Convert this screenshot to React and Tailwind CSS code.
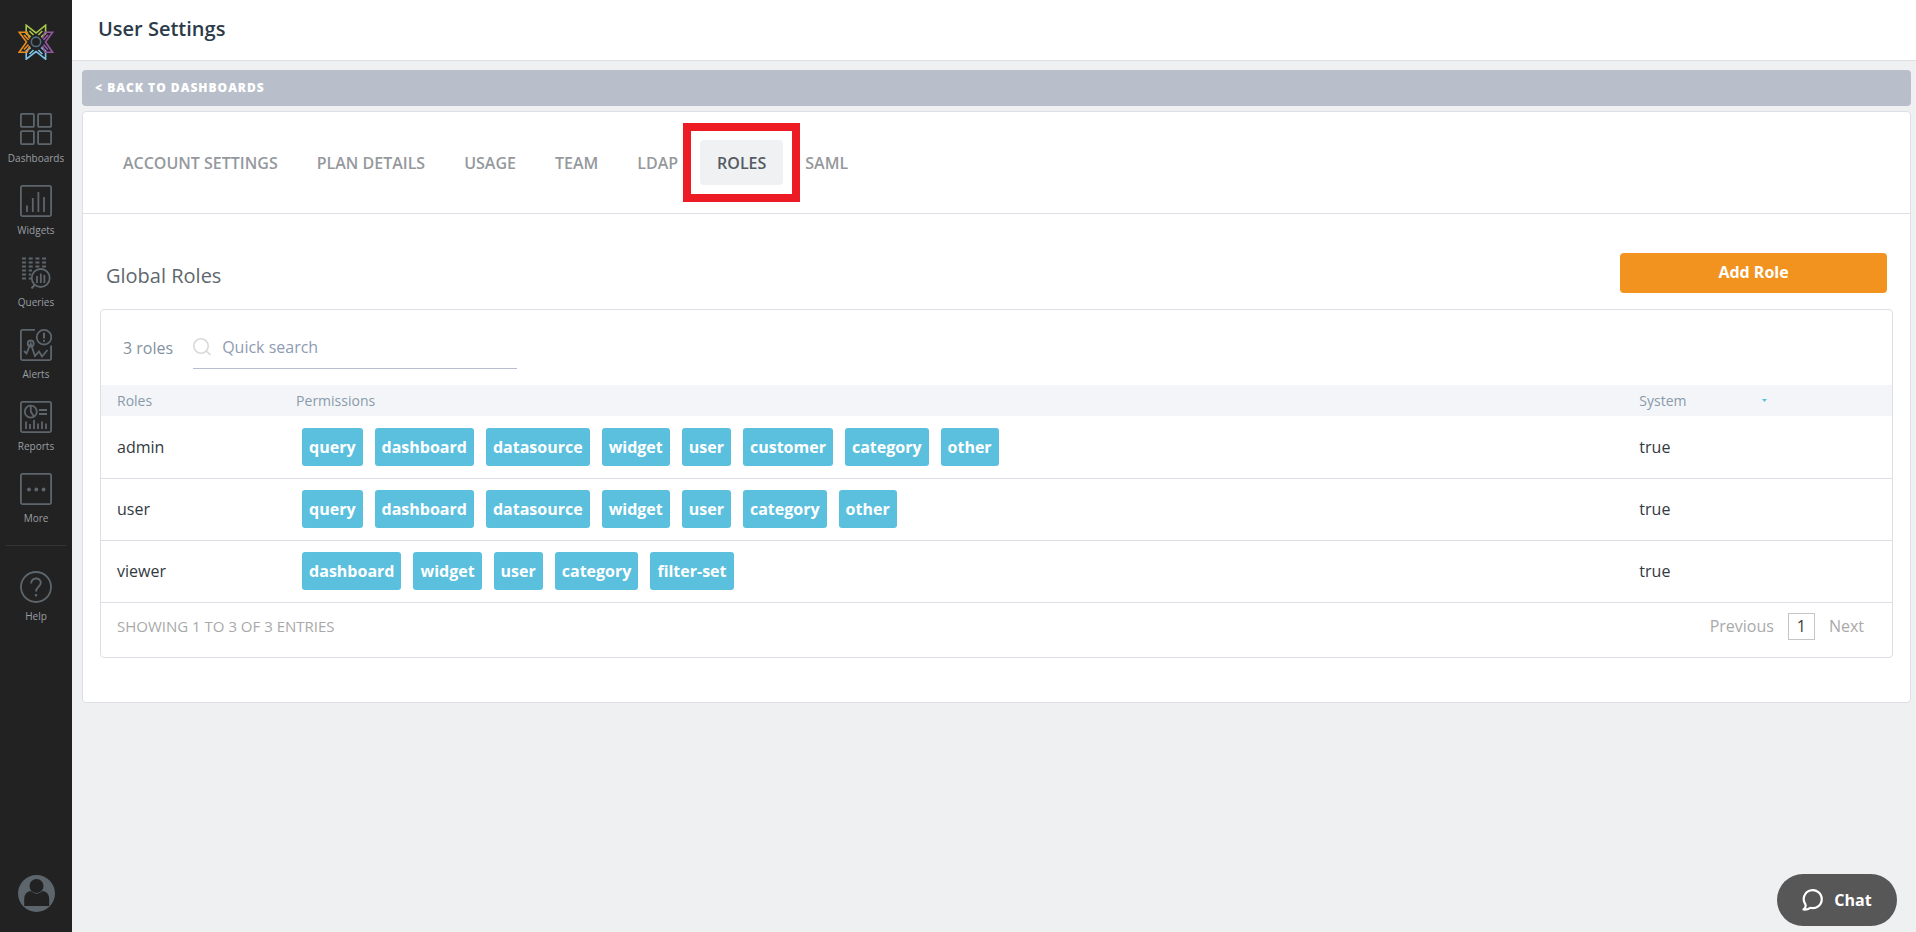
const NAV = [
  { label: 'Dashboards', Icon: DashboardsIcon },
  { label: 'Widgets', Icon: WidgetsIcon },
  { label: 'Queries', Icon: QueriesIcon },
  { label: 'Alerts', Icon: AlertsIcon },
  { label: 'Reports', Icon: ReportsIcon },
  { label: 'More', Icon: MoreIcon },
];

const TABS = ['Account Settings', 'Plan Details', 'Usage', 'Team', 'LDAP', 'Roles', 'SAML'];

const ROLES = [
  {
    name: 'admin',
    permissions: ['query', 'dashboard', 'datasource', 'widget', 'user', 'customer', 'category', 'other'],
    system: 'true',
  },
  {
    name: 'user',
    permissions: ['query', 'dashboard', 'datasource', 'widget', 'user', 'category', 'other'],
    system: 'true',
  },
  {
    name: 'viewer',
    permissions: ['dashboard', 'widget', 'user', 'category', 'filter-set'],
    system: 'true',
  },
];

function IconFrame({ children }) {
  return (
    <svg className="size-8" viewBox="0 0 32 32" fill="none" stroke="currentColor" strokeWidth="1.8" aria-hidden="true">
      {children}
    </svg>
  );
}

function DashboardsIcon() {
  return (
    <IconFrame>
      <rect x="0.9" y="0.9" width="13" height="13" rx="1" />
      <rect x="18.1" y="0.9" width="13" height="13" rx="1" />
      <rect x="0.9" y="18.1" width="13" height="13" rx="1" />
      <rect x="18.1" y="18.1" width="13" height="13" rx="1" />
    </IconFrame>
  );
}

function WidgetsIcon() {
  return (
    <IconFrame>
      <rect x="0.9" y="0.9" width="30.2" height="30.2" rx="1.5" />
      <path d="M7 20.5V27M12.8 13V27M18.4 7V27M24 12V27" />
    </IconFrame>
  );
}

function QueriesIcon() {
  return (
    <IconFrame>
      <path d="M2 1.5H26" strokeDasharray="4 2.7" />
      <path d="M2 5.5H26" strokeDasharray="4 2.7" />
      <path d="M2 9.5H26" strokeDasharray="4 2.7" />
      <path d="M2 13.5H12" strokeDasharray="4 2.7" />
      <path d="M2 17.5H11" strokeDasharray="4 2.7" />
      <path d="M2 21.5H11" strokeDasharray="4 2.7" />
      <circle cx="20.7" cy="21" r="9" />
      <path d="M17 19V26M20.8 16.5V26M24.4 18V26" />
      <path d="M14.5 28L11.5 31.5" strokeWidth="2" />
    </IconFrame>
  );
}

function AlertsIcon() {
  return (
    <IconFrame>
      <path d="M15 0.9H2.4Q0.9 0.9 0.9 2.4V29.6Q0.9 31.1 2.4 31.1H29.6Q31.1 31.1 31.1 29.6V16.5" />
      <circle cx="24" cy="8.2" r="7.3" />
      <path d="M24 3.8V9.4M24 11V12.8" strokeWidth="2" />
      <circle cx="10.7" cy="14.5" r="3" />
      <path d="M4 22L6.5 24.5L10.7 14.5L15 27L19 22.5L22 27.5L27.5 21" />
    </IconFrame>
  );
}

function ReportsIcon() {
  return (
    <IconFrame>
      <rect x="0.9" y="0.9" width="30.2" height="30.2" rx="1.5" />
      <circle cx="10.8" cy="10.7" r="6" />
      <path d="M10.8 4.7V10.7L14 15.5" />
      <path d="M19 9H27M19 13H27" />
      <path d="M6 20.5V28M10 23V28M14 19V28M18 22.5V28M22 20.5V28M26 22.5V28" />
    </IconFrame>
  );
}

function MoreIcon() {
  return (
    <IconFrame>
      <rect x="0.9" y="0.9" width="30.2" height="30.2" rx="1.5" />
      <g fill="currentColor" stroke="none">
        <circle cx="9" cy="16.5" r="1.9" />
        <circle cx="16.3" cy="16.5" r="1.9" />
        <circle cx="23.6" cy="16.5" r="1.9" />
      </g>
    </IconFrame>
  );
}

function HelpIcon() {
  return (
    <IconFrame>
      <circle cx="16" cy="16" r="15" />
      <path d="M11.2 12.5C11 5.8 20.8 6 20.8 11.8C20.8 15.5 16 15.8 16 20.5" strokeWidth="1.9" />
      <path d="M16 23V25.4" strokeWidth="2.2" />
    </IconFrame>
  );
}

function Logo() {
  return (
    <svg className="h-9 w-9" viewBox="0 0 36 36" fill="none" strokeWidth="1.6" strokeLinejoin="miter" aria-hidden="true">
      <path stroke="#a9c94a" d="M12.6 13L8.2 9.5V1.2L18 9L27.6 1.2V9.5L23.2 13M11.5 7L15.5 11M24.3 7L20.3 11" />
      <path stroke="#7cc4e6" d="M12.6 23.5L8.2 27V35.2L18 27.5L27.6 35.2V27L23.2 23.5M11.5 30L15.5 26M24.3 30L20.3 26" />
      <path stroke="#e98a1f" d="M11.5 14.5L9 8.2H1.2L8.5 18L1.2 28.2H9L11.5 22M6 11L10.5 16M6 25.5L10.5 20.5" />
      <path stroke="#9357a0" d="M24.5 14.5L27 8.2H34.6L27.5 18L34.6 28.2H27L24.5 22M30 11L25.500 16M30 25.5L25.5 20.5" />
      <circle cx="18" cy="17.8" r="4.7" stroke="#4f6d82" />
    </svg>
  );
}

function Sidebar() {
  return (
    <aside className="flex w-[72px] shrink-0 flex-col items-center bg-[#222222] pt-6 pb-5">
      <a href="#home" aria-label="Home" className="mb-[53px]">
        <Logo />
      </a>
      <nav className="flex flex-col gap-2 text-[#5d666d]">
        {NAV.map(({ label, Icon }) => (
          <NavLink key={label} label={label} Icon={Icon} />
        ))}
      </nav>
      <hr className="mt-2 mb-[25px] w-[60px] border-[#353535]" />
      <div className="text-[#5d666d]">
        <NavLink label="Help" Icon={HelpIcon} />
      </div>
      <a href="#profile" aria-label="Profile" className="mt-auto text-[#5d666d]">
        <svg className="h-[37px] w-[37px]" viewBox="0 0 37 37" aria-hidden="true">
          <circle cx="18.5" cy="18.5" r="18.5" fill="currentColor" />
          <path fill="#222222" d="M6.2 31V24Q6.5 16.5 13 16Q18.500 21.500 24.5 16Q30.8 16.5 31.2 24V31Z" />
          <circle cx="18.5" cy="11" r="7" fill="#222222" />
        </svg>
      </a>
    </aside>
  );
}

function NavLink({ label, Icon }) {
  return (
    <a href={`#${label.toLowerCase()}`} className="flex h-16 w-[72px] flex-col items-center">
      <Icon />
      <span className="mt-[3px] text-[10px] leading-5 text-[#9a9fa3]">{label}</span>
    </a>
  );
}

function Tabs() {
  return (
    <nav className="flex h-[102px] items-center gap-[5px] border-b border-[#dddfe5] px-[23px]">
      {TABS.map((tab) => {
        const active = tab === 'Roles';
        return (
          <a
            key={tab}
            href={`#${tab.toLowerCase().replace(' ', '-')}`}
            aria-current={active ? 'page' : undefined}
            className={
              active
                ? 'relative flex h-[45px] items-center rounded bg-[#eff1f3] px-[17px] font-semibold text-[#545b62] uppercase'
                : 'flex h-[45px] items-center px-[17px] font-semibold text-[#95999d] uppercase'
            }
          >
            {tab}
            {active && <span className="absolute -inset-[17px] border-8 border-[#ed1c24]" />}
          </a>
        );
      })}
    </nav>
  );
}

function RolesTable() {
  return (
    <table className="w-full table-fixed text-left">
      <colgroup>
        <col className="w-[10%]" />
        <col className="w-[75%]" />
        <col className="w-[15%]" />
      </colgroup>
      <thead className="bg-[#f3f5f9] text-sm text-[#8a9aa9]">
        <tr className="h-[31px]">
          <th scope="col" className="px-4 font-normal">Roles</th>
          <th scope="col" className="px-4 font-normal">Permissions</th>
          <th scope="col" className="px-4 font-normal">
            <button type="button" className="flex w-32 items-center justify-between">
              System
              <svg className="h-[3px] w-[5px] text-[#5bc0de]" viewBox="0 0 5 3" fill="currentColor" aria-hidden="true">
                <path d="M0 0H5L2.5 3Z" />
              </svg>
            </button>
          </th>
        </tr>
      </thead>
      <tbody className="text-[#32393f]">
        {ROLES.map((role) => (
          <tr key={role.name} className="h-[62px] border-b border-[#dddfe5]">
            <td className="px-4">{role.name}</td>
            <td className="px-[22px]">
              <ul className="flex flex-wrap gap-3">
                {role.permissions.map((permission) => (
                  <li key={permission} className="flex h-[38px] items-center rounded-[3px] bg-[#5bc0de] px-[7px] font-bold text-white">
                    {permission}
                  </li>
                ))}
              </ul>
            </td>
            <td className="px-4">{role.system}</td>
          </tr>
        ))}
      </tbody>
    </table>
  );
}

export default function App() {
  return (
    <div className="flex min-h-screen bg-[#eff0f2] font-['Open_Sans',sans-serif] text-base">
      <Sidebar />
      <div className="flex min-w-0 flex-1 flex-col">
        <header className="flex h-[61px] items-center border-b border-[#dddfe5] bg-white px-[26px] pb-[2px]">
          <h1 className="text-xl font-semibold text-[#2c3b49]">User Settings</h1>
        </header>
        <main className="flex flex-col gap-[5px] pt-[9px] pr-[5px] pl-[10px]">
          <a
            href="#dashboards"
            className="flex h-9 items-center rounded bg-[#b8bfca] px-[13px] text-xs font-extrabold tracking-[1px] text-white uppercase"
          >
            &lt; Back to dashboards
          </a>
          <div className="rounded border border-[#dddfe5] bg-white">
            <Tabs />
            <section className="px-[17px] pt-[39px] pb-11">
              <div className="flex items-start justify-between px-[6px]">
                <h2 className="mt-[9px] text-xl text-[#5f676e]">Global Roles</h2>
                <button type="button" className="h-10 w-[267px] rounded bg-[#f2931f] pb-[2px] font-bold text-white">
                  Add Role
                </button>
              </div>
              <div className="mt-4 rounded border border-[#dddfe5]">
                <div className="flex h-[75px] items-center gap-5 pl-[22px]">
                  <span className="text-[#84929f]">3 roles</span>
                  <label className="mb-4 flex h-11 w-[324px] items-center gap-[11px] self-end border-b border-[#b4bfd0]">
                    <svg className="size-[18px]" viewBox="0 0 18 18" fill="none" stroke="#d9d9d9" strokeWidth="1.6" aria-hidden="true">
                      <circle cx="8" cy="8" r="7.2" />
                      <path d="M13.2 13L17.5 17" />
                    </svg>
                    <input
                      type="search"
                      aria-label="Quick search"
                      placeholder="Quick search"
                      className="min-w-0 flex-1 bg-transparent outline-none placeholder:text-[#8f9bb3]"
                    />
                  </label>
                </div>
                <RolesTable />
                <div className="flex h-[54px] items-start justify-between pt-[10px] pr-7 pl-4 text-[#a9a9a9]">
                  <p className="text-[15px] leading-[26px] uppercase">Showing 1 to 3 of 3 entries</p>
                  <div className="flex items-center gap-[14px]">
                    <button type="button">Previous</button>
                    <button type="button" aria-current="page" className="size-[27px] border border-[#c5c5c5] leading-6 text-[#3a3a3a]">
                      1
                    </button>
                    <button type="button">Next</button>
                  </div>
                </div>
              </div>
            </section>
          </div>
        </main>
      </div>
      <button
        type="button"
        className="fixed right-[19px] bottom-[6px] flex h-[52px] w-[120px] items-center justify-center gap-[10px] rounded-full bg-[#575757] text-base font-bold text-white"
      >
        <svg className="size-[22px]" viewBox="0 0 22 22" fill="none" stroke="currentColor" strokeWidth="2.2" strokeLinejoin="round" aria-hidden="true">
          <path d="M1.5 20.5Q4.5 18.5 3.3 15.2A9 9 0 1 1 8.3 18.800Q5 21 1.5 20.5Z" />
        </svg>
        Chat
      </button>
    </div>
  );
}
